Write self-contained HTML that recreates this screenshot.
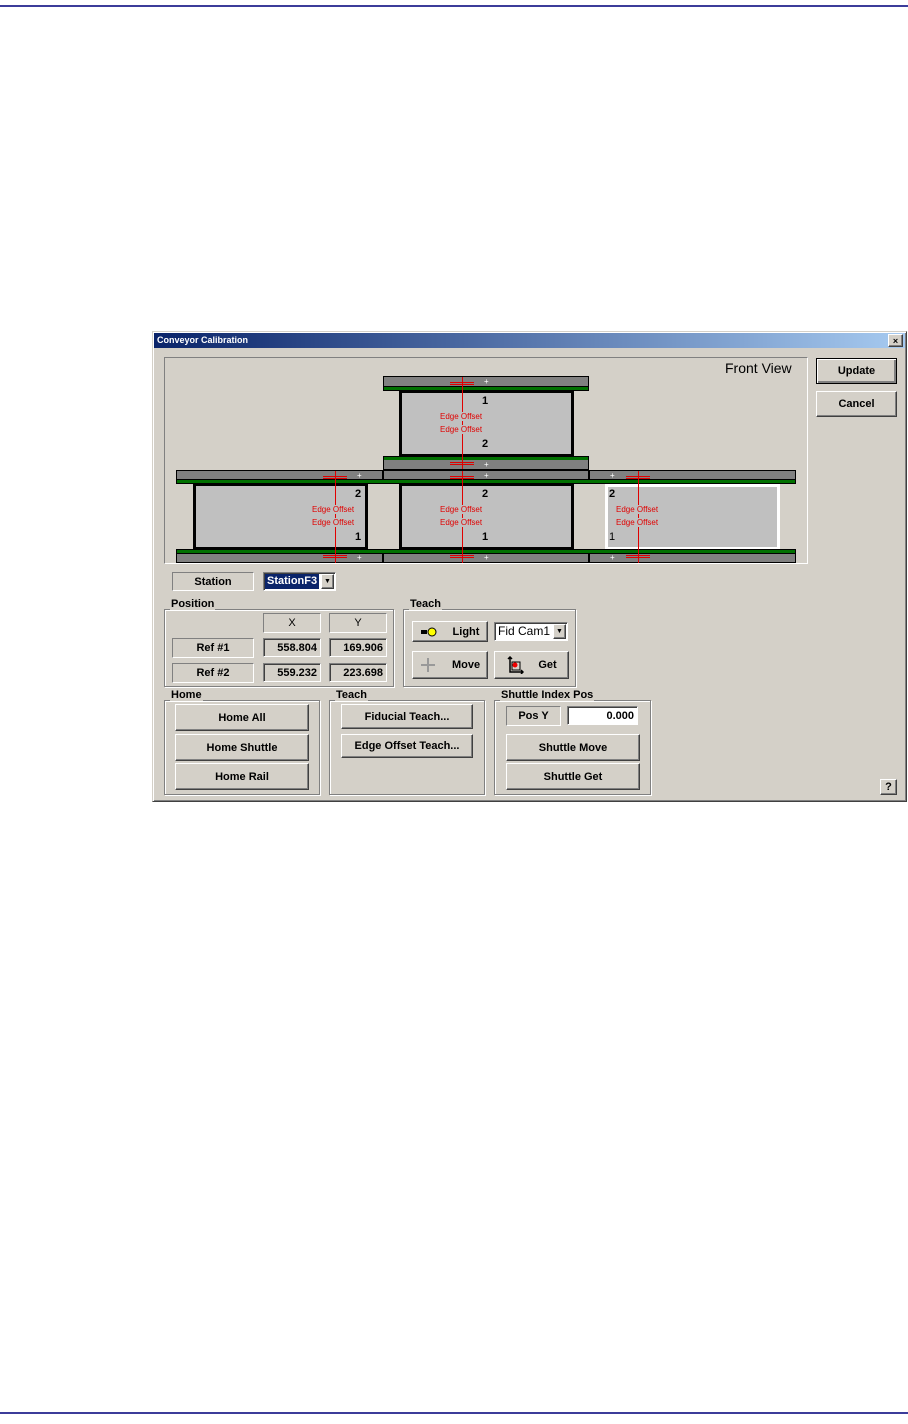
<!DOCTYPE html>
<html><head><meta charset="utf-8"><style>
*{box-sizing:border-box;margin:0;padding:0}
body{width:908px;height:1424px;background:#fff;position:relative;font-family:"Liberation Sans",sans-serif;overflow:hidden}
.a{position:absolute}
.hl{position:absolute;left:0;width:908px;height:2px;background:#3c3c9a}
.dlg{left:152px;top:331px;width:755px;height:471px;background:#d4d0c8;border:1px solid;border-color:#d4d0c8 #404040 #404040 #d4d0c8;box-shadow:inset 1px 1px #fff,inset -1px -1px #808080}
.title{left:154px;top:333px;width:751px;height:15px;background:linear-gradient(90deg,#0a246a,#a6caf0);color:#fff;font-size:9px;font-weight:bold;line-height:15px;padding-left:3px}
.btn{position:absolute;background:#d4d0c8;border:1px solid;border-color:#fff #404040 #404040 #fff;box-shadow:inset -1px -1px #808080;font-size:11px;font-weight:bold;text-align:center;color:#000;display:flex;align-items:center;justify-content:center}
.lab{position:absolute;border:1px solid;border-color:#808080 #fff #fff #808080;font-size:11px;font-weight:bold;display:flex;align-items:center;justify-content:center}
.val{position:absolute;border:1px solid;border-color:#808080 #fff #fff #808080;box-shadow:inset 1px 1px #404040;font-size:11px;font-weight:bold;display:flex;align-items:center;justify-content:flex-end;padding-right:3px}
.grp{position:absolute;border:1px solid #808080;box-shadow:1px 1px #fff,inset 1px 1px #fff}
.gl{position:absolute;background:#d4d0c8;font-size:11px;font-weight:bold;padding:0 1px;line-height:12px}
.rail{position:absolute;background:#808080;border:1px solid #000}
.grn{position:absolute;background:#007000;border:1px solid #000}
.board{position:absolute;background:#c0c0c0;border:3px solid #000}
.rd{position:absolute;color:#e00000;font-size:8px;line-height:9px}
.num{position:absolute;font-size:11px;font-weight:bold}
.vl{position:absolute;width:1px;background:#e00000}
.tick{position:absolute;height:1px;background:#e00000;width:24px}
.pl{position:absolute;color:#fff;font-size:8px;line-height:8px}
</style></head><body>
<div class="hl" style="top:5px"></div>
<div class="hl" style="top:1412px"></div>

<div class="a dlg"></div>
<div class="a title">Conveyor Calibration</div>
<div class="btn" style="left:888px;top:334px;width:15px;height:13px;font-size:9px">×</div>

<div class="a" style="left:164px;top:357px;width:644px;height:207px;border:1px solid;border-color:#808080 #fff #fff #808080"></div>
<div class="a" style="left:725px;top:360px;font-size:14px">Front View</div>

<!-- top station -->
<div class="rail" style="left:383px;top:376px;width:206px;height:11px;border-bottom:none"></div>
<div class="grn" style="left:383px;top:386px;width:206px;height:5px"></div>
<div class="board" style="left:399px;top:390px;width:175px;height:67px"></div>
<div class="grn" style="left:383px;top:456px;width:206px;height:5px"></div>
<div class="rail" style="left:383px;top:460px;width:206px;height:10px;border-top:none"></div>
<!-- lower rails -->
<div class="rail" style="left:176px;top:470px;width:207px;height:10px"></div>
<div class="rail" style="left:383px;top:470px;width:206px;height:10px"></div>
<div class="rail" style="left:589px;top:470px;width:207px;height:10px"></div>
<div class="grn" style="left:176px;top:479px;width:620px;height:5px"></div>
<div class="board" style="left:193px;top:483px;width:175px;height:67px"></div>
<div class="board" style="left:399px;top:483px;width:175px;height:67px"></div>
<div class="board" style="left:605px;top:484px;width:175px;height:66px;border-color:#fff"></div>
<div class="grn" style="left:176px;top:549px;width:620px;height:5px"></div>
<div class="rail" style="left:176px;top:553px;width:207px;height:10px"></div>
<div class="rail" style="left:383px;top:553px;width:206px;height:10px"></div>
<div class="rail" style="left:589px;top:553px;width:207px;height:10px"></div>

<!-- plus marks -->
<div class="pl" style="left:484px;top:378px">+</div>
<div class="pl" style="left:484px;top:461px">+</div>
<div class="pl" style="left:357px;top:472px">+</div>
<div class="pl" style="left:484px;top:472px">+</div>
<div class="pl" style="left:610px;top:472px">+</div>
<div class="pl" style="left:357px;top:554px">+</div>
<div class="pl" style="left:484px;top:554px">+</div>
<div class="pl" style="left:610px;top:554px">+</div>

<!-- red lines -->
<div class="vl" style="left:462px;top:377px;height:92px"></div>
<div class="tick" style="left:450px;top:382px"></div><div class="tick" style="left:450px;top:384px"></div>
<div class="tick" style="left:450px;top:462px"></div><div class="tick" style="left:450px;top:464px"></div>
<div class="vl" style="left:335px;top:471px;height:92px"></div>
<div class="vl" style="left:462px;top:471px;height:92px"></div>
<div class="vl" style="left:638px;top:471px;height:92px"></div>
<div class="tick" style="left:323px;top:476px"></div><div class="tick" style="left:323px;top:478px"></div>
<div class="tick" style="left:450px;top:476px"></div><div class="tick" style="left:450px;top:478px"></div>
<div class="tick" style="left:626px;top:476px"></div><div class="tick" style="left:626px;top:478px"></div>
<div class="tick" style="left:323px;top:555px"></div><div class="tick" style="left:323px;top:557px"></div>
<div class="tick" style="left:450px;top:555px"></div><div class="tick" style="left:450px;top:557px"></div>
<div class="tick" style="left:626px;top:555px"></div><div class="tick" style="left:626px;top:557px"></div>

<div class="rd" style="left:440px;top:412px;background:#c0c0c0">Edge Offset</div>
<div class="rd" style="left:440px;top:425px;background:#c0c0c0">Edge Offset</div>
<div class="num" style="left:482px;top:395px">1</div>
<div class="num" style="left:482px;top:438px">2</div>
<div class="rd" style="left:312px;top:505px;background:#c0c0c0">Edge Offset</div>
<div class="rd" style="left:312px;top:518px;background:#c0c0c0">Edge Offset</div>
<div class="num" style="left:355px;top:488px">2</div>
<div class="num" style="left:355px;top:531px">1</div>
<div class="rd" style="left:440px;top:505px;background:#c0c0c0">Edge Offset</div>
<div class="rd" style="left:440px;top:518px;background:#c0c0c0">Edge Offset</div>
<div class="num" style="left:482px;top:488px">2</div>
<div class="num" style="left:482px;top:531px">1</div>
<div class="rd" style="left:616px;top:505px;background:#c0c0c0">Edge Offset</div>
<div class="rd" style="left:616px;top:518px;background:#c0c0c0">Edge Offset</div>
<div class="num" style="left:609px;top:488px">2</div>
<div class="num" style="left:609px;top:531px;font-weight:normal">1</div>

<div class="btn" style="left:816px;top:358px;width:81px;height:26px;border-color:#000;box-shadow:inset 1px 1px #fff,inset -2px -2px #808080">Update</div>
<div class="btn" style="left:816px;top:391px;width:81px;height:26px">Cancel</div>

<!-- station -->
<div class="lab" style="left:172px;top:572px;width:82px;height:19px">Station</div>
<div class="a" style="left:263px;top:572px;width:73px;height:19px;background:#fff;border:1px solid;border-color:#808080 #fff #fff #808080;box-shadow:inset 1px 1px #404040"></div>
<div class="a" style="left:265px;top:574px;width:54px;height:15px;background:#0a246a;color:#fff;font-size:11px;font-weight:bold;line-height:15px;padding-left:2px">StationF3</div>
<div class="btn" style="left:321px;top:574px;width:13px;height:15px;font-size:7px">▼</div>

<!-- position -->
<div class="grp" style="left:164px;top:609px;width:230px;height:78px"></div>
<div class="gl" style="left:170px;top:598px">Position</div>
<div class="lab" style="left:263px;top:613px;width:58px;height:20px;font-weight:normal">X</div>
<div class="lab" style="left:329px;top:613px;width:58px;height:20px;font-weight:normal">Y</div>
<div class="lab" style="left:172px;top:638px;width:82px;height:20px">Ref #1</div>
<div class="val" style="left:263px;top:638px;width:58px;height:19px">558.804</div>
<div class="val" style="left:329px;top:638px;width:58px;height:19px">169.906</div>
<div class="lab" style="left:172px;top:663px;width:82px;height:20px">Ref #2</div>
<div class="val" style="left:263px;top:663px;width:58px;height:19px">559.232</div>
<div class="val" style="left:329px;top:663px;width:58px;height:19px">223.698</div>

<!-- teach -->
<div class="grp" style="left:403px;top:609px;width:173px;height:78px"></div>
<div class="gl" style="left:409px;top:598px">Teach</div>
<div class="btn" style="left:412px;top:621px;width:76px;height:21px"><svg width="18" height="10" style="margin-right:14px"><rect x="0" y="3" width="6" height="4" fill="#000"/><circle cx="11" cy="5" r="4" fill="#ff0" stroke="#000"/></svg>Light</div>
<div class="a" style="left:494px;top:622px;width:74px;height:19px;background:#fff;border:1px solid;border-color:#808080 #fff #fff #808080;box-shadow:inset 1px 1px #404040;font-size:12px;line-height:17px;padding-left:3px">Fid Cam1</div>
<div class="btn" style="left:553px;top:624px;width:13px;height:15px;font-size:7px">▼</div>
<div class="btn" style="left:412px;top:651px;width:76px;height:28px"><svg width="16" height="16" style="margin-right:16px"><path d="M8 1V15M1 8H15" stroke="#999" stroke-width="2"/></svg>Move</div>
<div class="btn" style="left:494px;top:651px;width:75px;height:28px"><svg width="18" height="18" style="margin-right:14px"><path d="M4 1V16H17M2 3L4 1L6 3M15 14L17 16L15 18" stroke="#000" fill="none" stroke-width="1.5"/><rect x="6" y="6" width="8" height="8" fill="none" stroke="#000"/><circle cx="9" cy="9" r="2.5" fill="#e00"/></svg>Get</div>

<!-- home -->
<div class="grp" style="left:164px;top:700px;width:156px;height:95px"></div>
<div class="gl" style="left:170px;top:689px">Home</div>
<div class="btn" style="left:175px;top:704px;width:134px;height:27px">Home All</div>
<div class="btn" style="left:175px;top:734px;width:134px;height:27px">Home Shuttle</div>
<div class="btn" style="left:175px;top:763px;width:134px;height:27px">Home Rail</div>

<div class="grp" style="left:329px;top:700px;width:156px;height:95px"></div>
<div class="gl" style="left:335px;top:689px">Teach</div>
<div class="btn" style="left:341px;top:704px;width:132px;height:25px">Fiducial Teach...</div>
<div class="btn" style="left:341px;top:734px;width:132px;height:24px">Edge Offset Teach...</div>

<div class="grp" style="left:494px;top:700px;width:157px;height:95px"></div>
<div class="gl" style="left:500px;top:689px">Shuttle Index Pos</div>
<div class="lab" style="left:506px;top:706px;width:55px;height:20px">Pos Y</div>
<div class="val" style="left:567px;top:706px;width:71px;height:19px;background:#fff">0.000</div>
<div class="btn" style="left:506px;top:734px;width:134px;height:27px">Shuttle Move</div>
<div class="btn" style="left:506px;top:763px;width:134px;height:27px">Shuttle Get</div>

<div class="btn" style="left:880px;top:779px;width:17px;height:16px;font-size:11px">?</div>
</body></html>
